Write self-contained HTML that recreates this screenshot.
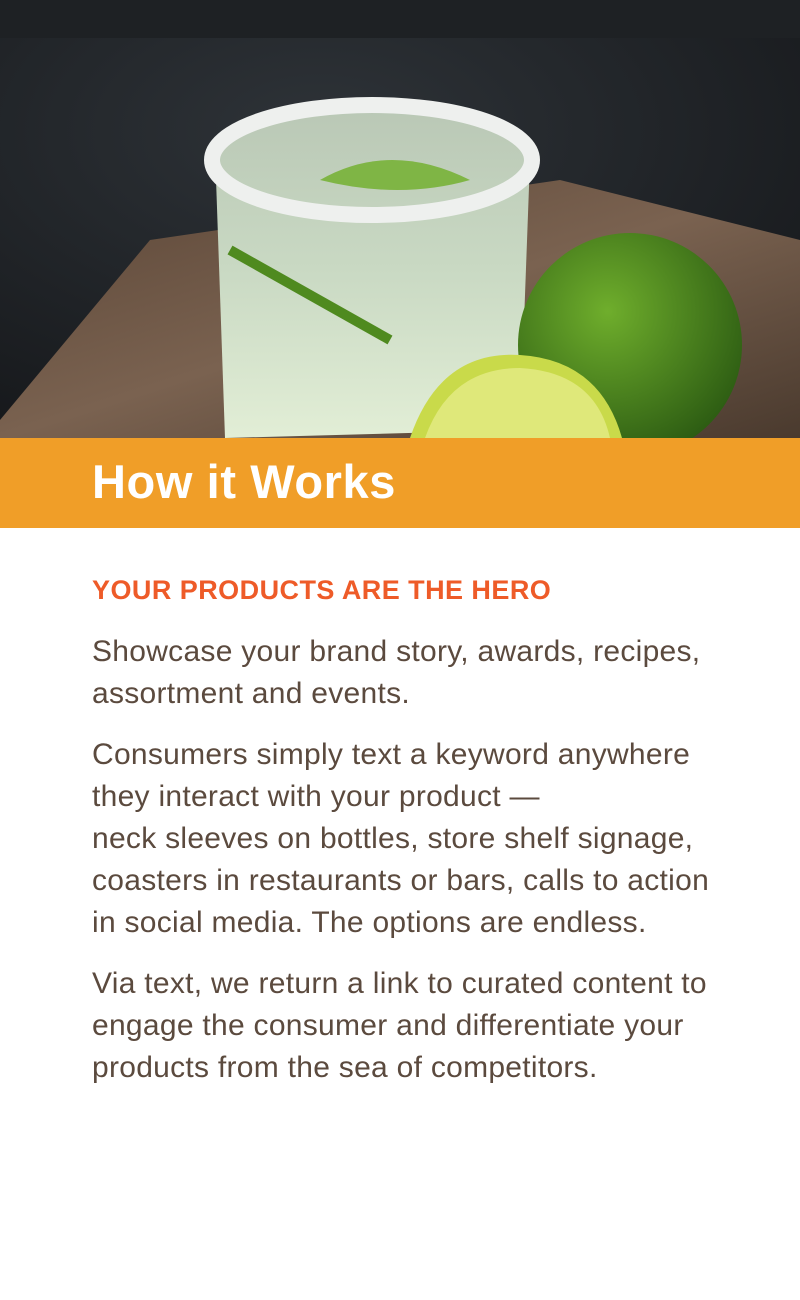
<!DOCTYPE html>
<html><head><meta charset="utf-8"><style>
*{margin:0;padding:0;box-sizing:border-box}
body{width:800px;height:1300px;background:#fff;font-family:"Liberation Sans",sans-serif;overflow:hidden;position:relative}
.hero{position:absolute;left:0;top:0;width:800px;height:438px;overflow:hidden}
.band{position:absolute;left:0;top:438px;width:800px;height:90px;background:#f09e28}
h2{position:absolute;left:92px;top:575px;color:#ee5b28;font-size:27px;font-weight:bold;letter-spacing:0.45px}
.p{position:absolute;left:92px;color:#5b4a3e;font-size:30px;line-height:42px;white-space:nowrap;letter-spacing:0.28px}
</style></head><body>
<div class="hero">
<svg width="800" height="438" viewBox="0 0 800 438">
<defs>
<radialGradient id="bg" cx="0.4" cy="0.3" r="0.8"><stop offset="0" stop-color="#2e3338"/><stop offset="1" stop-color="#16181b"/></radialGradient>
<linearGradient id="wood" x1="0" y1="0" x2="1" y2="1"><stop offset="0" stop-color="#5a4536"/><stop offset="0.5" stop-color="#7a6250"/><stop offset="1" stop-color="#4a3a2e"/></linearGradient>
<linearGradient id="glass" x1="0" y1="0" x2="0" y2="1"><stop offset="0" stop-color="#b9c7b5"/><stop offset="0.5" stop-color="#c9d9c3"/><stop offset="1" stop-color="#e2eed6"/></linearGradient>
<radialGradient id="lime" cx="0.4" cy="0.35" r="0.7"><stop offset="0" stop-color="#6fae2c"/><stop offset="1" stop-color="#2b5a12"/></radialGradient>
</defs>
<rect width="800" height="438" fill="url(#bg)"/>
<rect width="800" height="38" fill="#1e2124"/>
<polygon points="0,420 150,240 560,180 800,240 800,438 0,438" fill="url(#wood)"/>
<path d="M215,150 Q220,120 370,100 Q530,110 530,160 L520,430 L225,438 Z" fill="url(#glass)"/>
<ellipse cx="372" cy="160" rx="160" ry="55" fill="none" stroke="#eef0ee" stroke-width="16"/>
<path d="M320,180 Q390,140 470,180 Q400,200 320,180Z" fill="#7fb545"/>
<path d="M230,250 L390,340" stroke="#4f8a1f" stroke-width="10"/>
<circle cx="630" cy="345" r="112" fill="url(#lime)"/>
<path d="M410,438 Q440,350 520,355 Q600,360 622,438Z" fill="#c9da4a"/>
<path d="M425,438 Q450,368 520,368 Q595,372 610,438Z" fill="#dfe87a"/>
</svg>
</div>
<div class="band"></div>
<h1 style="position:absolute;left:92px;top:454px;color:#fff;font-size:47px;font-weight:bold;letter-spacing:0.6px">How it Works</h1>
<h2>YOUR PRODUCTS ARE THE HERO</h2>
<div class="p" style="top:631px">Showcase your brand story, awards, recipes,<br>assortment and events.</div>
<div class="p" style="top:734px">Consumers simply text a keyword anywhere<br>they interact with your product —<br>neck sleeves on bottles, store shelf signage,<br>coasters in restaurants or bars, calls to action<br>in social media. The options are endless.</div>
<div class="p" style="top:963px">Via text, we return a link to curated content to<br>engage the consumer and differentiate your<br>products from the sea of competitors.</div>
</body></html>
